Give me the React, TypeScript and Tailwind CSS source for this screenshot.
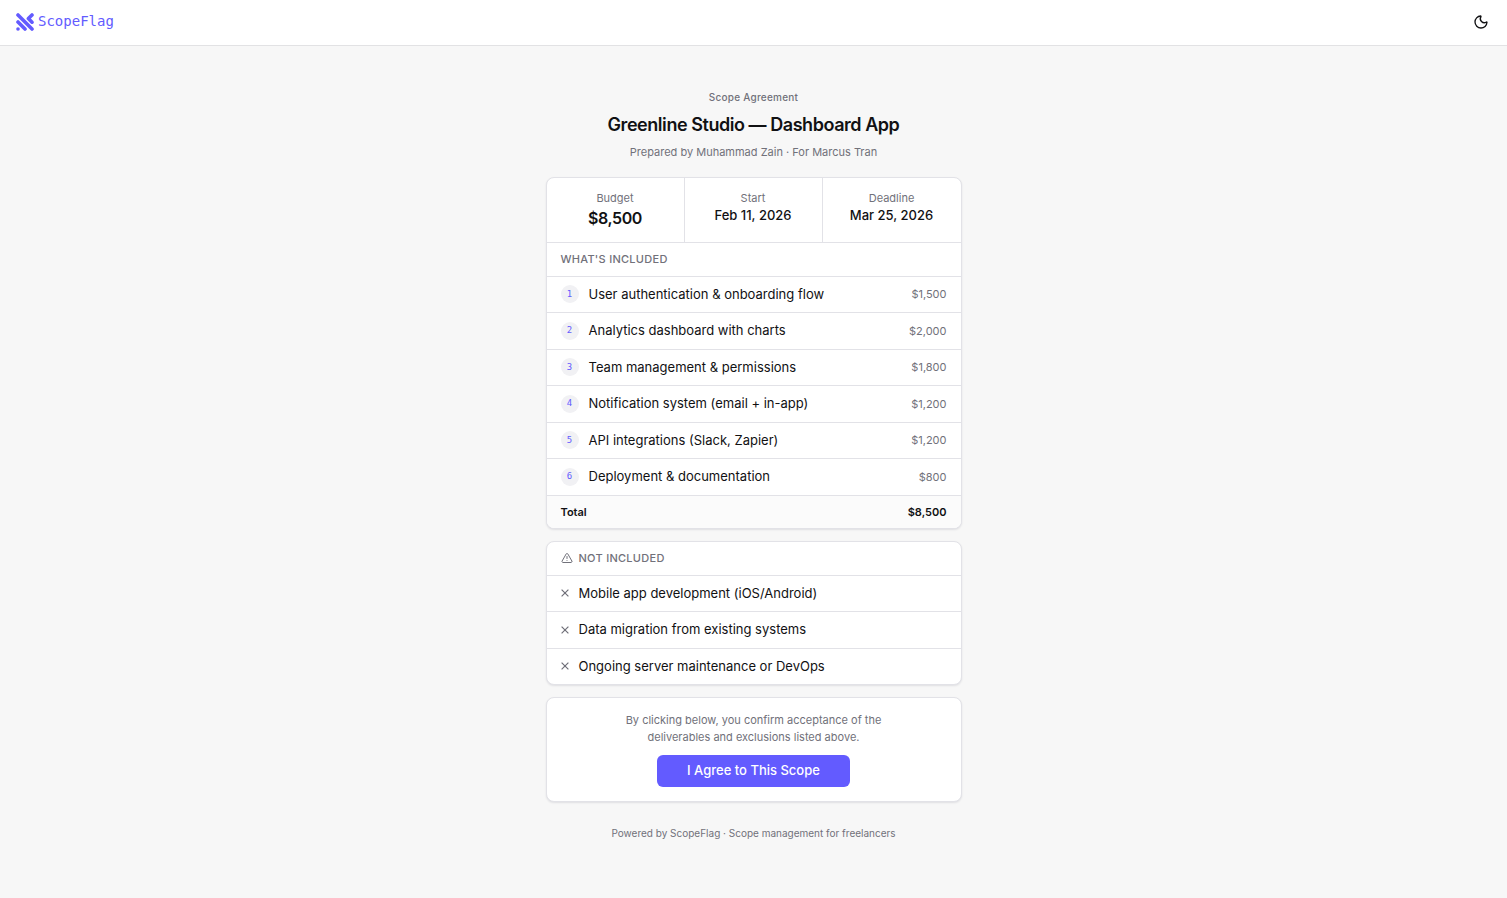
import { Moon, TriangleAlert } from 'lucide-react';

interface Deliverable {
  name: string;
  price: string;
}

const DELIVERABLES: Deliverable[] = [
  { name: 'User authentication & onboarding flow', price: '$1,500' },
  { name: 'Analytics dashboard with charts', price: '$2,000' },
  { name: 'Team management & permissions', price: '$1,800' },
  { name: 'Notification system (email + in-app)', price: '$1,200' },
  { name: 'API integrations (Slack, Zapier)', price: '$1,200' },
  { name: 'Deployment & documentation', price: '$800' },
];

const EXCLUSIONS = [
  'Mobile app development (iOS/Android)',
  'Data migration from existing systems',
  'Ongoing server maintenance or DevOps',
];

function Logo() {
  return (
    <svg viewBox="0 0 18 18" className="size-[18px]" fill="none" stroke="currentColor" strokeWidth="3.6" strokeLinecap="round" strokeLinejoin="round" aria-hidden="true">
      <path d="M2 2 16 16" />
      <path d="M2 9 9 16" />
      <path d="M16 2 12.4 5.6 16 9.2" />
      <path d="M2 16h.01" />
    </svg>
  );
}

function CrossIcon() {
  return (
    <svg viewBox="0 0 8 8" className="size-2 shrink-0 text-[#71717a]" fill="none" stroke="currentColor" strokeWidth="1.2" aria-hidden="true">
      <path d="M.6.6 7.4 7.4M7.4.6.6 7.4" />
    </svg>
  );
}

function Card({ children }: { children: React.ReactNode }) {
  return (
    <section className="overflow-hidden rounded-lg border border-[#e2e2e7] bg-white shadow-[0_1px_2px_rgba(20,20,50,0.1)]">
      {children}
    </section>
  );
}

export default function App() {
  return (
    <div className="min-h-screen bg-[#f7f7f7] font-[Inter,sans-serif] leading-normal text-[#111113]">
      <header className="flex h-[46px] items-center justify-between border-b border-[#e2e2e4] bg-white px-4 pb-0.5">
        <a href="#" className="flex items-center gap-1 text-[#635bff]">
          <Logo />
          <span className="font-['DejaVu_Sans_Mono',monospace] text-[14px]">ScopeFlag</span>
        </a>
        <button type="button" aria-label="Toggle theme" className="p-0.5">
          <Moon size={16} />
        </button>
      </header>

      <main className="mx-auto flex max-w-[416px] flex-col gap-3 py-11">
        <div className="mb-1 flex flex-col gap-1.5 text-center">
          <p className="text-[10px] font-medium tracking-wide text-[#71717a]">Scope Agreement</p>
          <h1 className="text-[18px] font-semibold tracking-tight">Greenline Studio — Dashboard App</h1>
          <p className="text-[11px] text-[#71717a]">Prepared by Muhammad Zain · For Marcus Tran</p>
        </div>

        <Card>
          <dl className="grid grid-cols-3 divide-x divide-[#e2e2e7] border-b border-[#e2e2e7] text-center">
            <div className="py-3">
              <dt className="text-[11px] text-[#71717a]">Budget</dt>
              <dd className="text-[16px] font-semibold tracking-tight">$8,500</dd>
            </div>
            <div className="py-3">
              <dt className="text-[11px] text-[#71717a]">Start</dt>
              <dd className="text-[13px] font-medium">Feb 11, 2026</dd>
            </div>
            <div className="py-3">
              <dt className="text-[11px] text-[#71717a]">Deadline</dt>
              <dd className="text-[13px] font-medium">Mar 25, 2026</dd>
            </div>
          </dl>
          <h2 className="border-b border-[#e2e2e7] px-3.5 py-2 text-[11px] font-medium tracking-wide text-[#71717a]">
            WHAT'S INCLUDED
          </h2>
          <ol>
            {DELIVERABLES.map((item, i) => (
              <li key={item.name} className="flex items-center border-b border-[#e2e2e7] px-3.5 py-2">
                <span className="mr-2.5 flex size-[18px] items-center justify-center rounded-full bg-[#f1f1f4] font-['DejaVu_Sans_Mono',monospace] text-[9px] text-[#635bff]">
                  {i + 1}
                </span>
                <span className="flex-1 text-[13px]">{item.name}</span>
                <span className="text-[11px] text-[#71717a]">{item.price}</span>
              </li>
            ))}
          </ol>
          <div className="flex justify-between bg-[#fbfbfb] px-3.5 py-2 text-[11px] font-semibold">
            <span>Total</span>
            <span>$8,500</span>
          </div>
        </Card>

        <Card>
          <h2 className="flex items-center gap-1.5 border-b border-[#e2e2e7] px-3.5 py-2 text-[11px] font-medium tracking-wide text-[#71717a]">
            <TriangleAlert size={12} strokeWidth={2} />
            NOT INCLUDED
          </h2>
          <ul className="divide-y divide-[#e2e2e7]">
            {EXCLUSIONS.map((item) => (
              <li key={item} className="flex items-center gap-2.5 px-3.5 py-2 text-[13px]">
                <CrossIcon />
                {item}
              </li>
            ))}
          </ul>
        </Card>

        <Card>
          <div className="flex flex-col items-center gap-[9px] p-3.5">
            <p className="max-w-[260px] text-center text-[11px] leading-[17px] text-[#71717a]">
              By clicking below, you confirm acceptance of the deliverables and exclusions listed above.
            </p>
            <button type="button" className="h-8 rounded-md bg-[#635bff] px-[30px] text-[13px] font-medium text-white">
              I Agree to This Scope
            </button>
          </div>
        </Card>

        <footer className="mt-3 text-center text-[10px] text-[#71717a]">
          Powered by ScopeFlag · Scope management for freelancers
        </footer>
      </main>
    </div>
  );
}
